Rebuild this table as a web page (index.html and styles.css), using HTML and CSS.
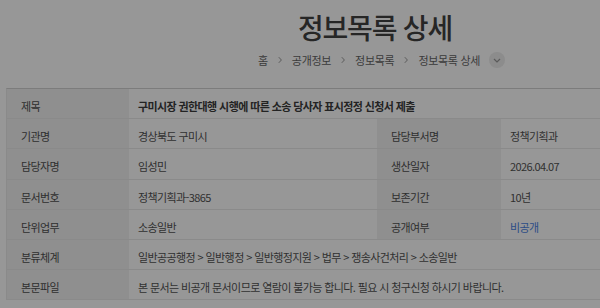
FILE: index.html
```html
<!DOCTYPE html>
<html lang="ko">
<head>
<meta charset="utf-8">
<title>정보목록 상세</title>
<link rel="stylesheet" href="styles.css">
</head>
<body>
<div class="page">
  <header class="page-head">
    <h1 class="page-title">정보목록 상세</h1>
    <nav class="crumbs">
      <span class="crumb">홈</span>
      <span class="sep"><svg width="6" height="8" viewBox="0 0 6 8"><path d="M1.8 1.2 L4.4 4 L1.8 6.8" fill="none" stroke="#555" stroke-width="0.9"/></svg></span>
      <span class="crumb">공개정보</span>
      <span class="sep"><svg width="6" height="8" viewBox="0 0 6 8"><path d="M1.8 1.2 L4.4 4 L1.8 6.8" fill="none" stroke="#555" stroke-width="0.9"/></svg></span>
      <span class="crumb">정보목록</span>
      <span class="sep"><svg width="6" height="8" viewBox="0 0 6 8"><path d="M1.8 1.2 L4.4 4 L1.8 6.8" fill="none" stroke="#555" stroke-width="0.9"/></svg></span>
      <span class="crumb">정보목록 상세</span>
      <span class="crumb-toggle"><svg width="10" height="7" viewBox="0 0 10 7"><path d="M2 2 L5 5 L8 2" fill="none" stroke="#5a5a5a" stroke-width="1.2"/></svg></span>
    </nav>
  </header>

  <div class="detail">
    <div class="th">제목</div>
    <div class="td wide strong">구미시장 권한대행 시행에 따른 소송 당사자 표시정정 신청서 제출</div>

    <div class="th">기관명</div>
    <div class="td">경상북도 구미시</div>
    <div class="th">담당부서명</div>
    <div class="td">정책기획과</div>

    <div class="th">담당자명</div>
    <div class="td">임성민</div>
    <div class="th">생산일자</div>
    <div class="td">2026.04.07</div>

    <div class="th">문서번호</div>
    <div class="td">정책기획과-3865</div>
    <div class="th">보존기간</div>
    <div class="td">10년</div>

    <div class="th">단위업무</div>
    <div class="td">소송일반</div>
    <div class="th">공개여부</div>
    <div class="td link">비공개</div>

    <div class="th">분류체계</div>
    <div class="td wide">일반공공행정 &gt; 일반행정 &gt; 일반행정지원 &gt; 법무 &gt; 쟁송사건처리 &gt; 소송일반</div>

    <div class="th">본문파일</div>
    <div class="td wide">본 문서는 비공개 문서이므로 열람이 불가능 합니다. 필요 시 청구신청 하시기 바랍니다.</div>
  </div>
</div>
</body>
</html>
```

FILE: styles.css
```css
html, body {
  margin: 0;
  padding: 0;
  overflow: hidden;
  background: #979797;
}

body {
  font-family: "Noto Sans CJK KR", "Noto Sans", sans-serif;
  color: #2c2c2c;
  width: 600px;
  height: 308px;
}

.page {
  width: 738px;
  padding: 0 0 0 6px;
}

.page-head {
  display: flex;
  flex-direction: column;
  align-items: center;
}

.page-title {
  margin: 8px 0 0;
  font-size: 28px;
  font-weight: 500;
  letter-spacing: -1.2px;
  line-height: 38px;
  color: #262626;
}

.crumbs {
  align-self: flex-start;
  margin: 4px 0 0 252px;
  display: flex;
  align-items: center;
  font-size: 11px;
  letter-spacing: -0.3px;
  color: #3a3a3a;
  height: 20px;
}

.sep {
  display: flex;
  align-items: center;
  margin: 0 9px;
}

.crumb-toggle {
  width: 16px;
  height: 16px;
  border-radius: 50%;
  background: #8c8c8c;
  margin-left: 9px;
  display: flex;
  align-items: center;
  justify-content: center;
}

.detail {
  margin-top: 18px;
  display: grid;
  grid-template-columns: 122px 248px 124px 1fr;
  border-top: 1px solid #7c7c7c;
  border-left: 1px solid #8a8a8a;
  font-size: 11px;
  letter-spacing: -0.6px;
}

.th, .td {
  height: 30.2px;
  padding-top: 5px;
  display: flex;
  align-items: center;
  border-bottom: 1px solid #8a8a8a;
  box-sizing: border-box;
}

.th {
  background: #8f8f8f;
  padding-left: 14px;
  color: #2e2e2e;
}

.td {
  padding-left: 9px;
  color: #303030;
}

.wide {
  grid-column: span 3;
}

.strong {
  font-weight: 700;
  color: #232323;
}

.link {
  color: #2b4c86;
}
```
